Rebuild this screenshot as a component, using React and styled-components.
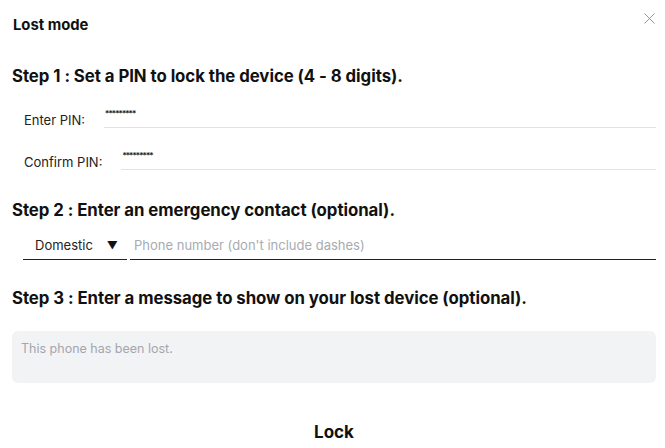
import React from "react";
import styled, { createGlobalStyle } from "styled-components";

const Global = createGlobalStyle`
  html, body { margin: 0; padding: 0; background: #fff; }
  body { font-family: Inter, "Noto Sans", Roboto, sans-serif; color: #111; }
  * { box-sizing: border-box; }
`;

const Dialog = styled.div`
  width: 665px;
  height: 448px;
  padding: 0 9px 0 12px;
  display: flex;
  flex-direction: column;
`;

const Header = styled.div`
  display: flex;
  justify-content: space-between;
  align-items: flex-start;
  height: 50px;
`;

const Title = styled.div`
  margin-top: 16px;
  margin-left: 1px;
  font-size: 14.8px;
  font-weight: 700;
  line-height: 18px;
  color: #111;
`;

const Close = styled.button`
  margin-top: 12px;
  margin-right: 1px;
  width: 12px;
  height: 12px;
  padding: 0;
  border: none;
  background: none;
  display: flex;
  align-items: center;
  justify-content: center;
  cursor: pointer;
`;

const StepTitle = styled.div`
  margin-top: ${(p) => p.$mt}px;
  font-size: 16.8px;
  font-weight: 700;
  line-height: 22px;
  letter-spacing: -0.05px;
  color: #111;
`;

const PinRow = styled.div`
  display: flex;
  align-items: center;
  gap: 19px;
  padding-left: 12px;
  margin-top: ${(p) => p.$mt}px;
`;

const Label = styled.span`
  font-size: 13px;
  line-height: 16px;
  margin-top: 5px;
  color: #222;
  white-space: nowrap;
`;

const PinInput = styled.div`
  flex: 1;
  height: 22px;
  border-bottom: 1px solid #e2e2e2;
  font-size: 8.5px;
  line-height: 12px;
  letter-spacing: -0.9px;
  color: #111;
  padding-top: 2px;
  padding-left: 1px;
`;

const ContactRow = styled.div`
  display: flex;
  align-items: stretch;
  gap: 3px;
  margin-top: 10px;
  margin-left: 11px;
  height: 29px;
`;

const Select = styled.div`
  width: 104px;
  display: flex;
  align-items: center;
  gap: 14px;
  padding-left: 12px;
  border-bottom: 1.5px solid #222;
  font-size: 13px;
  color: #222;
`;

const Caret = styled.span`
  font-size: 11px;
  color: #111;
`;

const Phone = styled.div`
  flex: 1;
  display: flex;
  align-items: center;
  padding-left: 4px;
  border-bottom: 1.5px solid #222;
  font-size: 13px;
  color: #a8abb2;
`;

const Message = styled.div`
  margin-top: 22px;
  height: 52px;
  background: #f2f3f5;
  border-radius: 6px;
  padding: 10px 9px;
  font-size: 12.5px;
  line-height: 16px;
  color: #a3a6ad;
`;

const LockButton = styled.button`
  margin: 38px auto 0;
  border: none;
  background: none;
  padding: 0;
  font-family: inherit;
  font-size: 17px;
  font-weight: 700;
  line-height: 22px;
  color: #111;
  cursor: pointer;
`;

export default function App() {
  return (
    <>
      <Global />
      <Dialog>
        <Header>
          <Title>Lost mode</Title>
          <Close aria-label="Close">
            <svg width="11" height="11" viewBox="0 0 11 11">
              <path d="M0.5 0.5L10.5 10.5M10.5 0.5L0.5 10.5" stroke="#8a8a8a" strokeWidth="0.9" />
            </svg>
          </Close>
        </Header>
        <StepTitle $mt={15}>Step 1 : Set a PIN to lock the device (4 - 8 digits).</StepTitle>
        <PinRow $mt={19}>
          <Label>Enter PIN:</Label>
          <PinInput>*********</PinInput>
        </PinRow>
        <PinRow $mt={20}>
          <Label>Confirm PIN:</Label>
          <PinInput>*********</PinInput>
        </PinRow>
        <StepTitle $mt={29}>Step 2 : Enter an emergency contact (optional).</StepTitle>
        <ContactRow>
          <Select>
            Domestic <Caret>▼</Caret>
          </Select>
          <Phone>Phone number (don't include dashes)</Phone>
        </ContactRow>
        <StepTitle $mt={27}>Step 3 : Enter a message to show on your lost device (optional).</StepTitle>
        <Message>This phone has been lost.</Message>
        <LockButton>Lock</LockButton>
      </Dialog>
    </>
  );
}
